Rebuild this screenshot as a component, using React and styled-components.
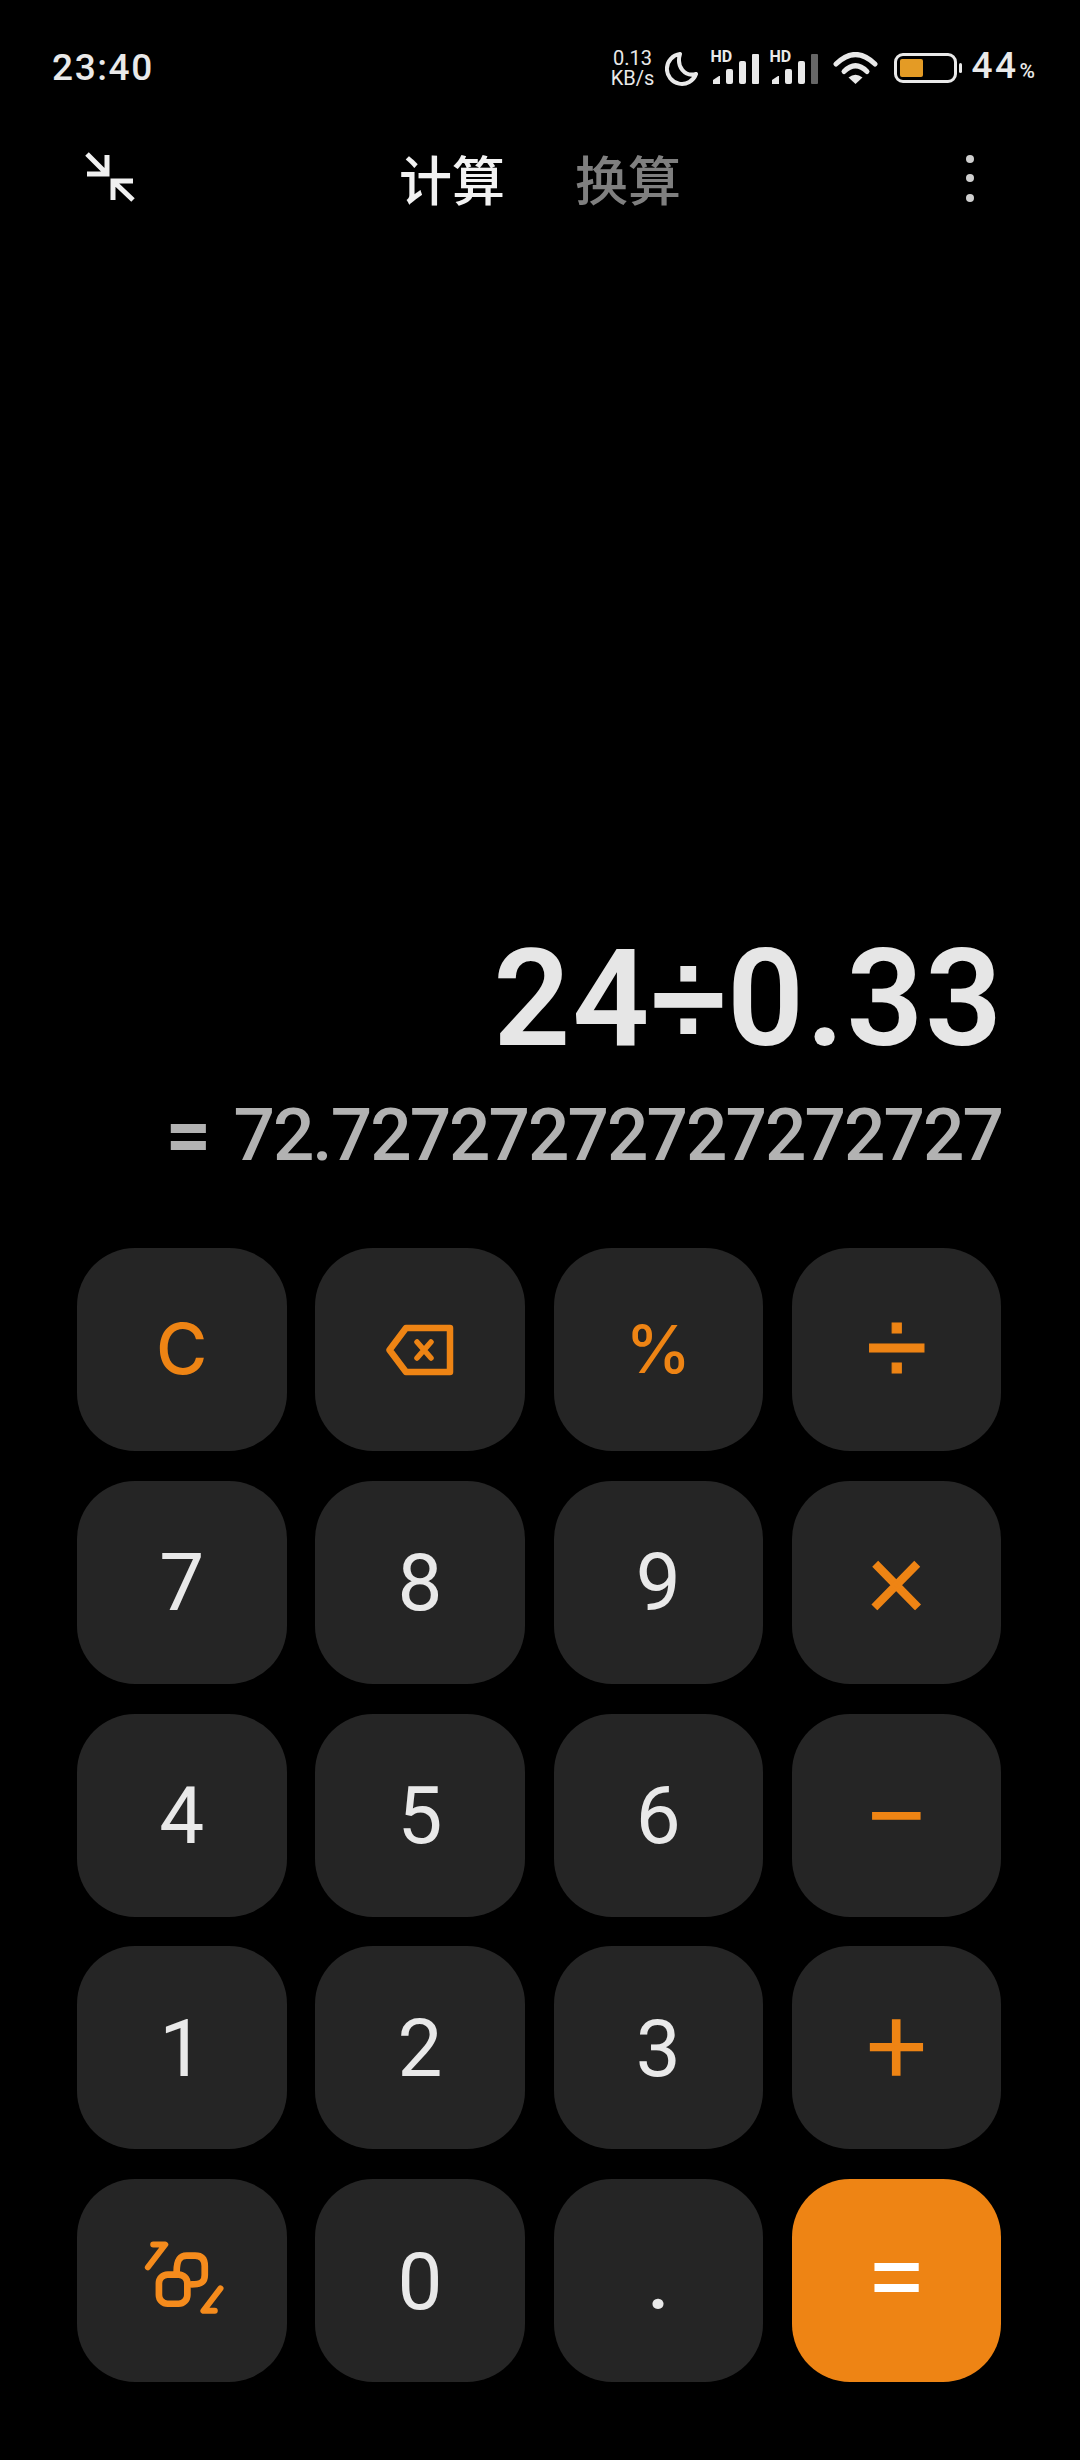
import React from 'react';
import styled, { createGlobalStyle } from 'styled-components';

const ORANGE = '#ee8414';
const LIGHT = '#e9e9e9';

const GlobalStyle = createGlobalStyle`
  html, body {
    margin: 0;
    padding: 0;
    background: #000;
  }
`;

const Screen = styled.div`
  width: 1080px;
  height: 2460px;
  display: flex;
  flex-direction: column;
  background: #000;
  color: ${LIGHT};
  font-family: Roboto, "Noto Sans CJK SC", sans-serif;
  overflow: hidden;
`;

const StatusBar = styled.div`
  height: 136px;
  flex: none;
  box-sizing: border-box;
  padding: 0 45px 0 52px;
  display: flex;
  align-items: center;
  justify-content: space-between;
`;

const Clock = styled.span`
  font-size: 37px;
  font-weight: 500;
  letter-spacing: 1.6px;
  line-height: 40px;
`;

const StatusIcons = styled.div`
  display: flex;
  align-items: center;
`;

const Speed = styled.div`
  width: 42px;
  display: flex;
  flex-direction: column;
  align-items: center;
  font-size: 20px;
  line-height: 20px;
`;

const Moon = styled.svg`
  width: 34px;
  height: 35px;
  margin-left: 12px;
  fill: none;
  stroke: ${LIGHT};
  stroke-width: 4;
  stroke-linejoin: round;
`;

const SignalBlock = styled.div`
  position: relative;
  width: 48px;
  height: 32px;
  margin-left: ${(p) => p.$gap}px;
`;

const SignalBars = styled.svg`
  display: block;
  width: 48px;
  height: 32px;
  fill: ${LIGHT};
`;

const HdTag = styled.span`
  position: absolute;
  left: -2px;
  top: -3px;
  font-size: 16px;
  font-weight: 700;
  line-height: 15px;
`;

const Wifi = styled.svg`
  width: 45px;
  height: 32px;
  margin-left: 14px;
  fill: none;
  stroke: ${LIGHT};
`;

const Battery = styled.div`
  margin-left: 16px;
  display: flex;
  align-items: center;
  gap: 2px;
`;

const BatteryBody = styled.div`
  box-sizing: border-box;
  width: 63px;
  height: 30px;
  padding: 3px;
  border: 3px solid ${LIGHT};
  border-radius: 9px;
`;

const BatteryFill = styled.div`
  height: 100%;
  border-radius: 2px;
  background: #e49b25;
`;

const BatteryTip = styled.div`
  width: 3px;
  height: 10px;
  border-radius: 2px;
  background: ${LIGHT};
`;

const Percent = styled.span`
  margin-left: 9px;
  font-size: 37px;
  font-weight: 500;
  letter-spacing: 2.5px;
  line-height: 40px;

  small {
    margin-left: 1px;
    font-size: 21px;
    letter-spacing: 0;
  }
`;

const TabBar = styled.div`
  height: 84px;
  flex: none;
  box-sizing: border-box;
  padding: 0 84px;
  display: grid;
  grid-template-columns: 1fr auto 1fr;
  align-items: center;
`;

const Collapse = styled.svg`
  display: block;
  width: 52px;
  height: 54px;
  fill: none;
  stroke: #f0f0f0;
  stroke-width: 5;
`;

const Tabs = styled.div`
  display: flex;
  gap: 70px;
`;

const Tab = styled.span`
  font-family: "Noto Sans CJK SC", sans-serif;
  font-size: 53px;
  font-weight: 500;
  line-height: 58px;
  color: ${(p) => (p.$active ? '#f2f2f2' : '#7f7f7f')};
`;

const MenuDots = styled.div`
  justify-self: end;
  margin-right: 22px;
  display: flex;
  flex-direction: column;
  gap: 11.5px;
`;

const Dot = styled.span`
  width: 8px;
  height: 8px;
  border-radius: 50%;
  background: #cfcfcf;
`;

const Display = styled.div`
  flex: 1;
  min-height: 0;
  display: flex;
  flex-direction: column;
  justify-content: flex-end;
  align-items: flex-end;
  padding: 0 78px 73px 0;
`;

const Expression = styled.div`
  margin-right: -2px;
  font-size: 135px;
  font-weight: 600;
  line-height: 135px;
  letter-spacing: 1.8px;
  color: #e6e6e6;
  white-space: nowrap;
`;

const DivideSign = styled.span`
  font-family: "Liberation Sans", sans-serif;
  font-weight: 700;
`;

const Result = styled.div`
  margin-top: 28px;
  display: flex;
  align-items: center;
  gap: 24px;
  font-size: 73px;
  font-weight: 500;
  line-height: 80px;
  letter-spacing: -2px;
  color: #b2b2b2;
  white-space: nowrap;
`;

const EqualsSign = styled.span`
  font-size: 80px;
  font-weight: 700;
`;

const Keypad = styled.div`
  flex: none;
  padding: 0 77px 78px;
  display: grid;
  grid-template-columns: repeat(4, 209.5px);
  grid-auto-rows: 203px;
  column-gap: 28.8px;
  row-gap: 29.75px;
`;

const Key = styled.button`
  padding: ${(p) => p.$drop || 0}px 0 ${(p) => p.$lift || 0}px;
  border: 0;
  border-radius: 58px;
  display: flex;
  align-items: center;
  justify-content: center;
  font-family: ${(p) => p.$font || 'Roboto'}, sans-serif;
  font-size: ${(p) => p.$size || 80}px;
  font-weight: ${(p) => p.$weight || 400};
  line-height: 1;
  -webkit-text-stroke: ${(p) => p.$stroke || 0}px currentColor;
  color: ${(p) => (p.$tone === 'digit' ? LIGHT : p.$tone === 'equals' ? '#fff' : ORANGE)};
  background: ${(p) => (p.$tone === 'equals' ? ORANGE : '#252525')};
`;

const BackspaceIcon = styled.svg`
  display: block;
  width: 68px;
  height: 52px;
  fill: none;
  stroke: ${ORANGE};
  stroke-linejoin: round;
  stroke-linecap: round;
`;

const SwapIcon = styled.svg`
  display: block;
  width: 87px;
  height: 87px;
  fill: none;
  stroke: #f58b1c;
`;

const Signal = ({ gap, faded }) => (
  <SignalBlock $gap={gap}>
    <SignalBars viewBox="0 0 48 32">
      <path d="M1 32v-4l6-4h1v8z" />
      <rect x="14" y="17" width="7" height="15" rx="2" />
      <rect x="27" y="9" width="7" height="23" rx="2" />
      <rect x="40" y="2" width="7" height="30" rx="1" fill={faded ? '#666' : LIGHT} />
    </SignalBars>
    <HdTag>HD</HdTag>
  </SignalBlock>
);

const keys = [
  { label: 'C', tone: 'op', font: 'Inter', size: 70, weight: 500, lift: 2 },
  { icon: 'backspace', tone: 'op' },
  { label: '%', tone: 'op', font: 'Inter', size: 66, weight: 500, lift: 2 },
  { label: '÷', tone: 'op', font: 'Liberation Sans', size: 112, weight: 400, stroke: 1, lift: 6 },
  { label: '7', tone: 'digit', drop: 2 },
  { label: '8', tone: 'digit', drop: 2 },
  { label: '9', tone: 'digit', drop: 2 },
  { label: '×', tone: 'op', size: 108, weight: 300, stroke: 2.5, lift: 10 },
  { label: '4', tone: 'digit', drop: 2 },
  { label: '5', tone: 'digit', drop: 2 },
  { label: '6', tone: 'digit', drop: 2 },
  { label: '−', tone: 'op', size: 114, weight: 300, stroke: 2, drop: 5 },
  { label: '1', tone: 'digit', drop: 2 },
  { label: '2', tone: 'digit', drop: 2 },
  { label: '3', tone: 'digit', drop: 2 },
  { label: '+', tone: 'op', size: 104, weight: 300, stroke: 2.5, lift: 2 },
  { icon: 'swap', tone: 'op' },
  { label: '0', tone: 'digit', drop: 2 },
  { label: '.', tone: 'digit', drop: 2, weight: 500 },
  { label: '=', tone: 'equals', font: 'Inter', size: 100, weight: 400, lift: 22 },
];

const KeyIcon = ({ name }) =>
  name === 'backspace' ? (
    <BackspaceIcon viewBox="0 0 68 52">
      <path d="M20 4H64V48H20L3.5 26Z" strokeWidth="6.5" />
      <path d="M31 18L45 34M45 18L31 34" strokeWidth="5.5" />
    </BackspaceIcon>
  ) : (
    <SwapIcon viewBox="234.5 231.5 260 260" strokeLinecap="round" strokeLinejoin="round">
      <rect x="297" y="344" width="85" height="87" rx="26" strokeWidth="20" />
      <path d="M350 335C350 302 358 287 380 287H405C425 287 434 298 434 318V345C434 365 425 373 395 373" strokeWidth="20" />
      <path d="M264 322L316 254H280" strokeWidth="18" />
      <path d="M481 385L430 452H464" strokeWidth="18" />
    </SwapIcon>
  );

const App = () => (
  <Screen>
    <GlobalStyle />
    <StatusBar>
      <Clock>23:40</Clock>
      <StatusIcons>
        <Speed>
          <span>0.13</span>
          <span>KB/s</span>
        </Speed>
        <Moon viewBox="0 0 34 35">
          <path d="M15 3A15 15 0 1 0 31 23C20 26 11 16 15 3Z" />
        </Moon>
        <Signal gap={13} />
        <Signal gap={11} faded />
        <Wifi viewBox="0 0 45 32" strokeLinecap="round">
          <path d="M3 12Q22.5 -7 42 12" strokeWidth="5" />
          <path d="M11 19.5Q22.5 8 34 19.5" strokeWidth="5" />
          <path d="M22.5 32L15.5 25.5Q22.5 20 29.5 25.5Z" fill={LIGHT} stroke="none" />
        </Wifi>
        <Battery>
          <BatteryBody>
            <BatteryFill style={{ width: '44%' }} />
          </BatteryBody>
          <BatteryTip />
        </Battery>
        <Percent>
          44<small>%</small>
        </Percent>
      </StatusIcons>
    </StatusBar>

    <TabBar>
      <Collapse viewBox="84 151 52 54">
        <path d="M87 154L107 174M107 155V174H87" />
        <path d="M133 200L113 181M113 200V181H133" />
      </Collapse>
      <Tabs>
        <Tab $active>计算</Tab>
        <Tab>换算</Tab>
      </Tabs>
      <MenuDots>
        <Dot />
        <Dot />
        <Dot />
      </MenuDots>
    </TabBar>

    <Display>
      <Expression>
        24<DivideSign>÷</DivideSign>0.33
      </Expression>
      <Result>
        <EqualsSign>=</EqualsSign>
        <span>72.72727272727272727</span>
      </Result>
    </Display>

    <Keypad>
      {keys.map((key, i) => (
        <Key
          key={i}
          $tone={key.tone}
          $font={key.font}
          $size={key.size}
          $weight={key.weight}
          $stroke={key.stroke}
          $lift={key.lift}
          $drop={key.drop}
        >
          {key.icon ? <KeyIcon name={key.icon} /> : key.label}
        </Key>
      ))}
    </Keypad>
  </Screen>
);

export default App;
